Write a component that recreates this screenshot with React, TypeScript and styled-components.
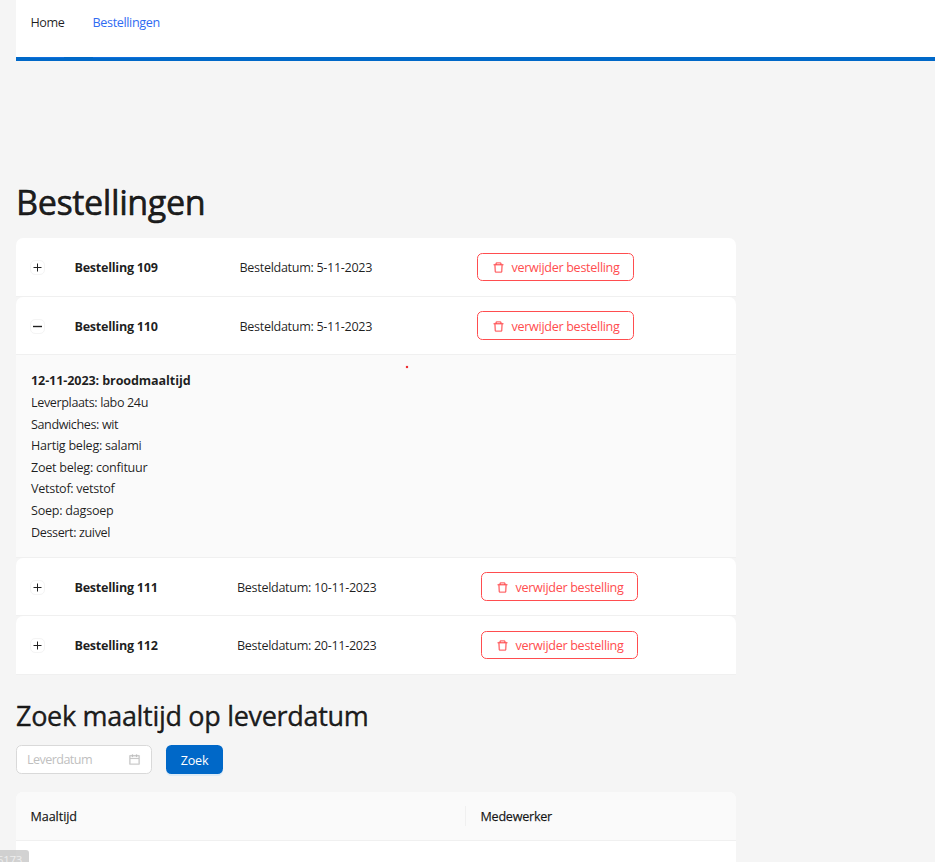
import React, { useState } from 'react';
import styled, { createGlobalStyle } from 'styled-components';
import { AiOutlineCalendar, AiOutlineDelete } from 'react-icons/ai';

const GlobalStyle = createGlobalStyle`
  * { box-sizing: border-box; }
  body {
    margin: 0;
    background: #f5f5f5;
    color: rgba(0, 0, 0, 0.88);
    font: 400 12.6px/21.6px "Segoe UI", "Open Sans", sans-serif;
    letter-spacing: -0.32px;
  }
`;

const Page = styled.div`
  height: 862px;
  padding-left: 16px;
  overflow: hidden;
  position: relative;
`;

const NavBar = styled.nav`
  display: flex;
  gap: 28.2px;
  height: 61px;
  padding: 0 14.4px;
  background: #fff;
  border-bottom: 4px solid #0068c8;
`;

const NavItem = styled.a<{ $active?: boolean; $spacing: number }>`
  height: 58px;
  padding-top: 12px;
  border-bottom: 1px solid #0f6fdc;
  letter-spacing: ${(p) => p.$spacing}px;
  color: ${(p) => (p.$active ? '#2f6bf2' : 'inherit')};
  cursor: pointer;
`;

const Content = styled.main`
  width: 720px;
`;

const PageTitle = styled.h1`
  margin: 120px 0 15px;
  font-size: 34.2px;
  font-weight: 400;
  line-height: 42px;
  letter-spacing: -0.44px;
  -webkit-text-stroke: 0.6px currentColor;
`;

const SectionTitle = styled.h2`
  margin: 24px 0 12px;
  font-size: 27px;
  font-weight: 400;
  line-height: 34px;
  letter-spacing: -0.31px;
  -webkit-text-stroke: 0.4px currentColor;
`;

const OrderRow = styled.div<{ $height: number; $columns: string }>`
  display: grid;
  grid-template-columns: ${(p) => p.$columns};
  align-items: center;
  height: ${(p) => p.$height}px;
  padding-left: 14px;
  background: #fff;
  border-bottom: 1px solid #f0f0f0;
  border-radius: 7px 7px 0 0;
`;

const ExpandButton = styled.button`
  display: flex;
  align-items: center;
  justify-content: center;
  width: 15px;
  height: 15px;
  margin-top: 1px;
  padding: 0;
  background: #fff;
  border: 1px solid #f4f4f4;
  border-radius: 5px;
  color: #1f1f1f;
`;

const OrderName = styled.strong`
  padding-top: 2px;
  font-weight: 700;
  letter-spacing: -0.27px;
`;

const OrderDate = styled.span`
  padding-top: 2px;
`;

const DeleteButton = styled.button<{ $height: number }>`
  display: flex;
  align-items: center;
  gap: 6.5px;
  width: 157px;
  height: ${(p) => p.$height}px;
  padding: 0 0 0 14px;
  background: #fff;
  border: 1px solid #ff4d4f;
  border-radius: 5.4px;
  color: #ff4d4f;
  font: inherit;
  letter-spacing: -0.31px;
  white-space: nowrap;

  svg {
    margin-top: 1px;
    stroke: currentColor;
    stroke-width: 16px;
  }
`;

const ButtonLabel = styled.span`
  padding-top: 2px;
`;

const Details = styled.div`
  height: 203px;
  padding: 15.4px 15px 0;
  background: #fafafa;
  border-bottom: 1px solid #f0f0f0;
`;

const DetailTitle = styled.div`
  font-weight: 700;
  letter-spacing: -0.115px;
`;

const DetailLine = styled.div<{ $spacing: number }>`
  letter-spacing: ${(p) => p.$spacing}px;
`;

const SearchBar = styled.form`
  display: flex;
  gap: 14px;
  height: 29px;
  margin-bottom: 18px;
`;

const DateField = styled.div`
  display: flex;
  align-items: center;
  justify-content: space-between;
  width: 136px;
  padding: 0 10px;
  background: #fff;
  border: 1px solid #d9d9d9;
  border-radius: 5.4px;
  color: #bfbfbf;
  letter-spacing: -0.57px;

  svg {
    stroke: currentColor;
    stroke-width: 16px;
  }
`;

const SearchButton = styled.button`
  width: 57px;
  padding: 2px 0 0;
  background: #0068c8;
  border: 0;
  border-radius: 5.4px;
  box-shadow: 0 2px 0 rgba(5, 145, 255, 0.1);
  color: #fff;
  font: inherit;
  letter-spacing: -0.2px;
`;

const MealTable = styled.div`
  height: 90px;
  background: #fff;
  border-radius: 7px 7px 0 0;
`;

const MealHeader = styled.div`
  display: grid;
  grid-template-columns: 450px 1fr;
  align-items: center;
  height: 49px;
  background: #fafafa;
  border-bottom: 1px solid #f0f0f0;
  border-radius: 7px 7px 0 0;
  -webkit-text-stroke: 0.25px currentColor;
`;

const HeaderCell = styled.div<{ $divided?: boolean; $spacing: number }>`
  height: 20px;
  padding: 1px 0 0 14.5px;
  line-height: 20px;
  letter-spacing: ${(p) => p.$spacing}px;
  border-right: ${(p) => (p.$divided ? '1px solid #f0f0f0' : '0')};
`;

const StatusBubble = styled.div`
  position: absolute;
  left: 0;
  bottom: 0;
  width: 29px;
  height: 12px;
  background: rgba(200, 200, 200, 0.82);
  border-radius: 0 3px 0 0;
  color: #ededed;
  font-size: 11.5px;
  line-height: 19px;
  letter-spacing: -0.3px;
  text-indent: -3px;
`;

const PointerDot = styled.div`
  position: absolute;
  left: 406px;
  top: 366px;
  width: 2px;
  height: 2px;
  background: #ee2e32;
  box-shadow: 0 0 1px #ee2e32;
`;

type Order = { id: number; date: string; height: number; buttonHeight: number; columns: string };

const narrow = '44.5px 165px 237.5px 157px';
const wide = '44.5px 162.5px 244px 157px';

const orders: Order[] = [
  { id: 109, date: '5-11-2023', height: 59, buttonHeight: 28, columns: narrow },
  { id: 110, date: '5-11-2023', height: 58, buttonHeight: 29, columns: narrow },
  { id: 111, date: '10-11-2023', height: 58, buttonHeight: 29, columns: wide },
  { id: 112, date: '20-11-2023', height: 59, buttonHeight: 28, columns: wide },
];

const mealLines: [string, number][] = [
  ['Leverplaats: labo 24u', -0.38],
  ['Sandwiches: wit', -0.4],
  ['Hartig beleg: salami', -0.26],
  ['Zoet beleg: confituur', -0.26],
  ['Vetstof: vetstof', -0.29],
  ['Soep: dagsoep', -0.25],
  ['Dessert: zuivel', -0.39],
];

function ExpandIcon({ open }: { open: boolean }) {
  return (
    <svg width="9" height="9" viewBox="0 0 9 9" fill="none" stroke="currentColor">
      <path d={open ? 'M0 4.5H9' : 'M.5 4.5H8.5M4.5.5V8.5'} strokeWidth={open ? 1.4 : 1} />
    </svg>
  );
}

export default function App() {
  const [openId, setOpenId] = useState<number | null>(110);

  return (
    <Page>
      <GlobalStyle />
      <NavBar>
        <NavItem $spacing={-0.4}>Home</NavItem>
        <NavItem $active $spacing={-0.37}>Bestellingen</NavItem>
      </NavBar>
      <Content>
        <PageTitle>Bestellingen</PageTitle>
        {orders.map((order) => {
          const open = openId === order.id;
          return (
            <React.Fragment key={order.id}>
              <OrderRow $height={order.height} $columns={order.columns}>
                <ExpandButton onClick={() => setOpenId(open ? null : order.id)}>
                  <ExpandIcon open={open} />
                </ExpandButton>
                <OrderName>Bestelling {order.id}</OrderName>
                <OrderDate>Besteldatum: {order.date}</OrderDate>
                <DeleteButton $height={order.buttonHeight}>
                  <AiOutlineDelete size={13} />
                  <ButtonLabel>verwijder bestelling</ButtonLabel>
                </DeleteButton>
              </OrderRow>
              {open && (
                <Details>
                  <DetailTitle>12-11-2023: broodmaaltijd</DetailTitle>
                  {mealLines.map(([text, spacing]) => (
                    <DetailLine key={text} $spacing={spacing}>{text}</DetailLine>
                  ))}
                </Details>
              )}
            </React.Fragment>
          );
        })}
        <SectionTitle>Zoek maaltijd op leverdatum</SectionTitle>
        <SearchBar>
          <DateField>
            Leverdatum
            <AiOutlineCalendar size={13} />
          </DateField>
          <SearchButton type="button">Zoek</SearchButton>
        </SearchBar>
        <MealTable>
          <MealHeader>
            <HeaderCell $divided $spacing={-0.07}>Maaltijd</HeaderCell>
            <HeaderCell $spacing={-0.25}>Medewerker</HeaderCell>
          </MealHeader>
        </MealTable>
      </Content>
      <PointerDot />
      <StatusBubble>5173</StatusBubble>
    </Page>
  );
}
